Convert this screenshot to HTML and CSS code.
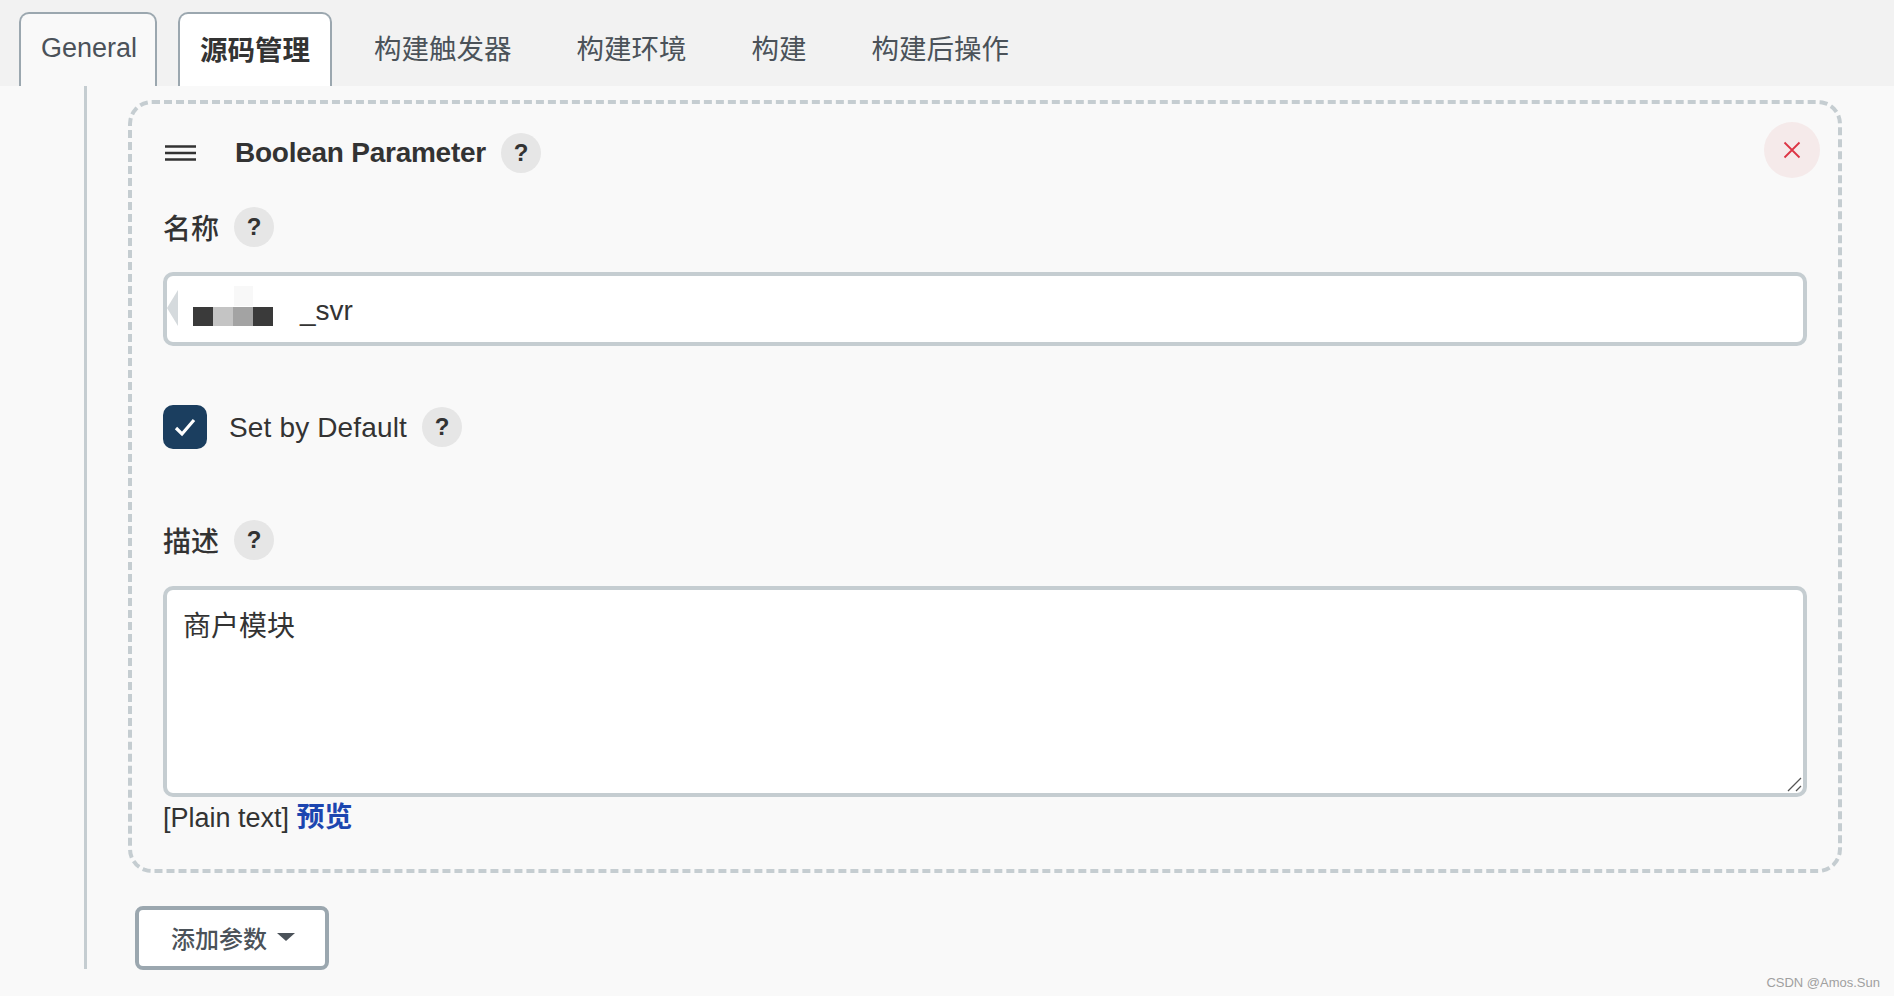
FILE: index.html
```html
<!DOCTYPE html>
<html lang="zh-CN">
<head>
  <meta charset="UTF-8">
  <title>Boolean Parameter</title>
  <link rel="stylesheet" href="styles.css">
</head>
<body>

  <div class="tabs">
    <a class="tab tab-box tab-general">General</a>
    <a class="tab tab-box tab-active">源码管理</a>
    <a class="tab">构建触发器</a>
    <a class="tab">构建环境</a>
    <a class="tab">构建</a>
    <a class="tab">构建后操作</a>
  </div>

  <div class="section">
    <div class="card">
      <div class="card-head">
        <svg class="handle" width="31" height="16" viewBox="0 0 31 16">
          <path d="M0 1.5h31M0 8h31M0 14.5h31" stroke="#333" stroke-width="2.4"/>
        </svg>
        <span class="card-title">Boolean Parameter</span>
        <span class="help">?</span>
        <button class="close">
          <svg width="18" height="18" viewBox="0 0 18 18">
            <path d="M1.5 1.5l15 15M16.5 1.5l-15 15" stroke="#dc3545" stroke-width="1.8"/>
          </svg>
        </button>
      </div>

      <div class="label label-name">名称 <span class="help">?</span></div>
      <div class="input">
        <span class="mosaic"><i class="m1"></i><i class="m2"></i><i class="m3"></i><i class="m1"></i></span>_svr
      </div>

      <div class="check-row">
        <span class="checkbox">
          <svg width="24" height="20" viewBox="0 0 24 20">
            <path d="M3 11l6 6L21 3" fill="none" stroke="#fff" stroke-width="3.2"/>
          </svg>
        </span>
        <span class="check-label">Set by Default</span>
        <span class="help">?</span>
      </div>

      <div class="label label-desc">描述 <span class="help">?</span></div>
      <div class="desc-wrap">
        <textarea class="desc">商户模块</textarea>
        <svg class="grip" width="16" height="16" viewBox="0 0 16 16">
          <path d="M1 15L14 2M9 15l5-5" stroke="#555" stroke-width="1.3"/>
        </svg>
      </div>
      <div class="preview">[Plain text] <a class="preview-link">预览</a></div>
    </div>

    <button class="add-btn">添加参数 <span class="caret"></span></button>
  </div>

  <div class="watermark">CSDN @Amos.Sun</div>

</body>
</html>
```

FILE: styles.css
```css
* {
  box-sizing: border-box;
}

html, body {
  height: 100%;
}

body {
  margin: 0;
  background-color: #f9f9f9;
  color: #333;
  font-family: "Liberation Sans", "Noto Sans CJK SC", sans-serif;
  font-size: 28px;
  position: relative;
  overflow: hidden;
}

.tabs {
  display: flex;
  height: 86px;
  padding: 12px 0 0 19px;
  background-color: #f2f2f2;
  color: #4b5259;
  font-size: 27.5px;
}

.tab {
  display: flex;
  align-items: center;
  height: 74px;
  padding: 0 45px 4px 20px;
  white-space: nowrap;
}

.tab-box {
  padding: 0 20px 4px;
  margin-right: 21px;
  background-color: #f9f9f9;
  border: 2px solid #9ba7af;
  border-bottom: none;
  border-radius: 10px 10px 0 0;
}

.tab-general {
  width: 138px;
  padding: 0 18px 4px 20px;
  font-size: 27px;
}

.tab-active {
  background-color: #fff;
  color: #333;
  font-weight: 700;
  margin-right: 22px;
}

.section {
  margin: 0 0 0 84px;
  padding: 14px 0 0 41px;
  height: 883px;
  border-left: 3px solid #c5cdd1;
}

.card {
  width: 1714px;
  height: 773px;
  padding: 0 31px;
  border: 4px dashed #c5cdd1;
  border-radius: 24px;
}

.card-head {
  display: flex;
  align-items: center;
  height: 98px;
  position: relative;
}

.handle {
  margin-left: 2px;
}

.card-title {
  margin-left: 39px;
  font-weight: 700;
  letter-spacing: -0.25px;
}

.help {
  display: inline-flex;
  align-items: center;
  justify-content: center;
  width: 40px;
  height: 40px;
  margin-left: 15px;
  border-radius: 50%;
  background-color: #e6e6e6;
  font-size: 24px;
  font-weight: 700;
}

.close {
  position: absolute;
  right: -13px;
  top: 18px;
  display: flex;
  align-items: center;
  justify-content: center;
  width: 56px;
  height: 56px;
  padding: 0;
  border: none;
  border-radius: 50%;
  background-color: #f5eaea;
}

.label {
  display: flex;
  align-items: center;
  height: 40px;
  font-weight: 500;
}

.label-name {
  margin-top: 5px;
}

.input {
  display: flex;
  align-items: center;
  height: 74px;
  margin-top: 25px;
  padding: 4px 0 0 26px;
  background-color: #fff;
  border: 4px solid #c5cdd1;
  border-radius: 10px;
  position: relative;
}

/* leftovers of the blurred-out name in the screenshot */
.input::before {
  content: "";
  position: absolute;
  left: 0;
  top: 14px;
  width: 11px;
  height: 36px;
  background-color: #d5dadd;
  clip-path: polygon(100% 0, 100% 100%, 0 50%);
}

.input::after {
  content: "";
  position: absolute;
  left: 67px;
  top: 10px;
  width: 19px;
  height: 20px;
  background-color: #f8f8f8;
}

.mosaic {
  display: flex;
  width: 107px;
  height: 19px;
  margin-top: 10px;
}

.mosaic i {
  width: 20px;
  height: 19px;
}

.m1 {
  background-color: #3a3a3a;
}

.m2 {
  background-color: #c4c4c4;
}

.m3 {
  background-color: #a3a3a3;
}

.check-row {
  display: flex;
  align-items: center;
  height: 44px;
  margin-top: 59px;
}

.checkbox {
  display: flex;
  align-items: center;
  justify-content: center;
  width: 44px;
  height: 44px;
  border-radius: 10px;
  background-color: #1b3e5f;
}

.check-label {
  margin-left: 22px;
  padding-top: 2px;
  letter-spacing: 0.15px;
}

.label-desc {
  margin-top: 71px;
}

.desc-wrap {
  position: relative;
  margin-top: 26px;
}

.desc {
  display: block;
  width: 100%;
  height: 211px;
  padding: 17px 16px;
  background-color: #fff;
  border: 4px solid #c5cdd1;
  border-radius: 10px;
  color: #333;
  font-family: inherit;
  font-size: 28px;
  line-height: 40px;
  outline: none;
  resize: none;
}

.grip {
  position: absolute;
  right: 4px;
  bottom: 5px;
  pointer-events: none;
}

.preview {
  margin-top: 1px;
  font-size: 27px;
  line-height: 40px;
}

.preview-link {
  color: #1c46b0;
  font-size: 28px;
  font-weight: 700;
}

.add-btn {
  display: flex;
  align-items: center;
  gap: 10px;
  width: 194px;
  height: 64px;
  margin: 33px 0 0 7px;
  padding: 0 0 2px 32px;
  background-color: #fff;
  border: 4px solid #9ba7af;
  border-radius: 8px;
  color: #4b5259;
  font-family: inherit;
  font-size: 24px;
  font-weight: 500;
}

.caret {
  width: 0;
  height: 0;
  border-left: 9px solid transparent;
  border-right: 9px solid transparent;
  border-top: 8px solid #4b5259;
}

.watermark {
  position: absolute;
  right: 14px;
  bottom: 6px;
  color: #a0a0a0;
  font-family: "Liberation Sans", sans-serif;
  font-size: 13px;
}
```
